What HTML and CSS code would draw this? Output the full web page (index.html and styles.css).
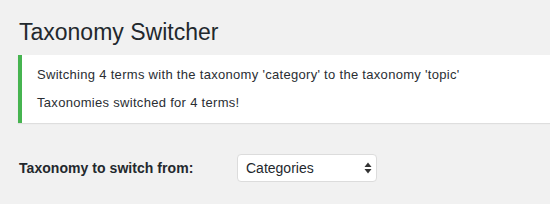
FILE: index.html
```html
<!DOCTYPE html>
<html lang="en">
<head>
<meta charset="utf-8">
<title>Taxonomy Switcher</title>
<link rel="stylesheet" href="styles.css">
</head>
<body>
<div class="wrap">
  <h1 class="title">Taxonomy Switcher</h1>
  <div class="notice">
    <p>Switching 4 terms with the taxonomy 'category' to the taxonomy 'topic'</p>
    <p>Taxonomies switched for 4 terms!</p>
  </div>
  <div class="form-row">
    <label class="form-label">Taxonomy to switch from:</label>
    <div class="select">
      <span class="select-value">Categories</span>
      <svg class="select-arrows" width="8" height="12" viewBox="0 0 8 12" aria-hidden="true">
        <path d="M4 0.5 L7.5 5 L0.5 5 Z" fill="#333"/>
        <path d="M4 11.5 L7.5 7 L0.5 7 Z" fill="#333"/>
      </svg>
    </div>
  </div>
</div>
</body>
</html>
```
FILE: styles.css
```css
html, body {
  margin: 0;
  padding: 0;
}
body {
  background: #f1f1f1;
  font-family: "Liberation Sans", Arial, sans-serif;
  color: #23282d;
  width: 550px;
  height: 204px;
  overflow: hidden;
}
.wrap {
  padding: 18px 0 0 18px;
}
.title {
  margin: 0;
  font-size: 23px;
  font-weight: 400;
  line-height: 29px;
  color: #23282d;
  padding-left: 1px;
}
.notice {
  margin-top: 8px;
  background: #fff;
  border-left: 4px solid #46b450;
  box-shadow: 0 1px 1px rgba(0, 0, 0, 0.08);
  padding: 10px 15px;
  display: flex;
  flex-direction: column;
  gap: 8px;
}
.notice p {
  margin: 0;
  font-size: 13px;
  line-height: 20px;
  letter-spacing: 0.3px;
  color: #2a2e33;
}
.form-row {
  margin-top: 31px;
  display: flex;
  align-items: center;
}
.form-label {
  width: 219px;
  padding-left: 1px;
  box-sizing: border-box;
  font-size: 14px;
  font-weight: 700;
  letter-spacing: 0.05px;
  color: #23282d;
}
.select {
  width: 140px;
  height: 28px;
  box-sizing: border-box;
  border: 1px solid #dcdcdc;
  border-radius: 4px;
  background: #fff;
  display: flex;
  align-items: center;
  justify-content: space-between;
  padding: 0 4px 0 8px;
}
.select-value {
  font-size: 14px;
  color: #23282d;
}
.select-arrows {
  display: block;
}
```
